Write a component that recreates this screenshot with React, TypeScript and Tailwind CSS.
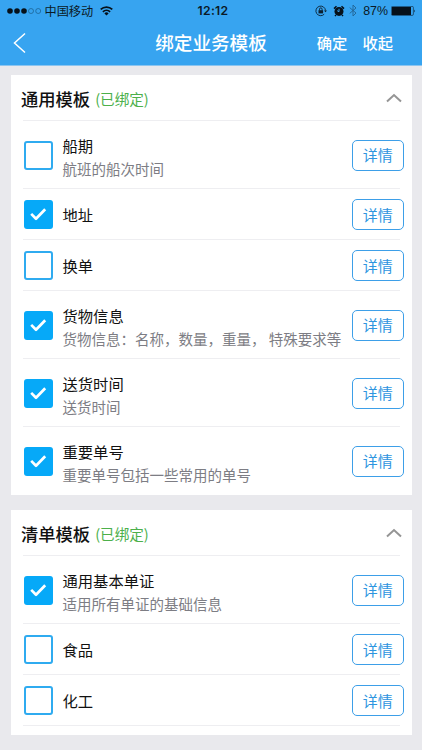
type Item = { title: string; desc?: string; checked?: boolean };

const general: Item[] = [
  { title: "船期", desc: "航班的船次时间" },
  { title: "地址", checked: true },
  { title: "换单" },
  { title: "货物信息", desc: "货物信息：名称，数量，重量， 特殊要求等", checked: true },
  { title: "送货时间", desc: "送货时间", checked: true },
  { title: "重要单号", desc: "重要单号包括一些常用的单号", checked: true },
];

const lists: Item[] = [
  { title: "通用基本单证", desc: "适用所有单证的基础信息", checked: true },
  { title: "食品" },
  { title: "化工" },
];

function Checkbox({ checked }: { checked?: boolean }) {
  if (!checked) {
    return <span className="h-[29px] w-[29px] shrink-0 rounded-[3px] border-2 border-[#2fabf0]" />;
  }
  return (
    <span className="flex h-[29px] w-[29px] shrink-0 items-center justify-center rounded-[3px] bg-[#06a9f8]">
      <svg width="29" height="29" viewBox="0 0 29 29" fill="none" stroke="white" strokeWidth="2.7" strokeLinejoin="round">
        <path d="M7.2 13.9L12 18.7L21.2 9.3" />
      </svg>
    </span>
  );
}

function Row({ item, line }: { item: Item; line: boolean }) {
  return (
    <div className={`relative flex items-center pr-[8px] pl-[13px] ${item.desc ? "h-[68px]" : "h-[51px]"}`}>
      <Checkbox checked={item.checked} />
      <div className={`ml-[10px] flex-1 whitespace-nowrap ${item.desc ? "pt-[4px]" : "pb-[2px]"}`}>
        <div className="text-[15.3px] leading-[22px] text-[#111]">{item.title}</div>
        {item.desc && <div className="mt-[2px] text-[14.5px] leading-[22px] text-[#7d7d84]">{item.desc}</div>}
      </div>
      <button className="h-[31px] w-[51.5px] shrink-0 rounded-[5px] border border-[#3d9fe8] text-[15px] leading-[28px] text-[#2e95df]">
        详情
      </button>
      {line && <span className="absolute right-[12px] bottom-0 left-[12px] h-px bg-[#eeeef1]" />}
    </div>
  );
}

function Card({ title, items, closed }: { title: string; items: Item[]; closed?: boolean }) {
  return (
    <section className={`mr-[10.5px] ml-[10.5px] bg-white ${closed ? "pb-[8.5px]" : ""}`}>
      <div className="relative flex h-[46px] items-center pr-[10px] pl-[10.5px]">
        <h2 className="mt-[1px] text-[17.3px] leading-[24px] font-medium text-[#111]">{title}</h2>
        <span className="mt-[1px] ml-[5px] text-[14.6px] text-[#4cb04b]">(已绑定)</span>
        <svg className="ml-auto" width="16" height="10" viewBox="0 0 16 10" fill="none" stroke="#959595" strokeWidth="2">
          <path d="M1 8.6L8 2L15 8.6" />
        </svg>
        <span className="absolute right-[12px] bottom-0 left-[12px] h-px bg-[#eeeef1]" />
      </div>
      {items.map((item, i) => (
        <Row key={item.title} item={item} line={closed || i < items.length - 1} />
      ))}
    </section>
  );
}

function StatusBar() {
  return (
    <div className="grid h-[21px] grid-cols-[1fr_auto_1fr] items-center text-[12px] leading-[20px] text-[#0b1a26]">
      <div className="flex items-center pl-[7px]">
        <svg width="35" height="8" viewBox="0 0 35 8">
          <circle cx="3" cy="4" r="2.8" fill="#06111a" />
          <circle cx="10" cy="4" r="2.8" fill="#06111a" />
          <circle cx="17" cy="4" r="2.8" fill="#06111a" />
          <circle cx="24" cy="4" r="2.5" fill="none" stroke="#14507a" strokeWidth=".6" />
          <circle cx="31.2" cy="4" r="2.5" fill="none" stroke="#14507a" strokeWidth=".6" />
        </svg>
        <span className="ml-[2.5px] text-[12.2px]">中国移动</span>
        <svg className="ml-[7px]" width="13" height="10" viewBox="0 0 13 10" fill="none" stroke="#06111a" strokeWidth="1.7">
          <path d="M.7 3.4A8.4 8.4 0 0 1 12.3 3.4" />
          <path d="M2.9 5.8A5.2 5.2 0 0 1 10.1 5.8" />
          <path d="M6.5 9.4L4.4 7.4A3 3 0 0 1 8.6 7.4Z" fill="#06111a" stroke="none" />
        </svg>
      </div>
      <div className="pl-[4px] font-['Inter','Noto_Sans_CJK_SC',sans-serif] text-[12.2px] font-semibold tracking-[.3px] text-[#0b1a26]">12:12</div>
      <div className="flex items-center justify-end pr-[6px]">
        <svg width="12" height="12" viewBox="0 0 12 12" fill="none" stroke="#0b2030" strokeWidth=".9">
          <path d="M9.2 9.2A4.8 4.8 0 1 1 10.5 5.5" />
          <path d="M8.9 5.4H12L10.5 7.3Z" fill="#0b2030" stroke="none" />
          <rect x="3.5" y="5.2" width="4.6" height="3.2" fill="#0b2030" stroke="none" />
          <path d="M4.5 5.3V4.2A1.3 1.3 0 0 1 7.1 4.2V5.3" />
        </svg>
        <svg className="ml-[6px]" width="12" height="12" viewBox="0 0 12 12">
          <circle cx="6" cy="6.4" r="4.5" fill="#06111a" />
          <path d="M1 3.6L3.5 1.3M11 3.6L8.5 1.3M3 10L2 11M9 10L10 11" stroke="#06111a" strokeWidth="1.5" />
          <path d="M6 6.7V3.8M6 6.7L4.2 5.7" stroke="#37a4f0" strokeWidth="1" fill="none" />
        </svg>
        <svg className="ml-[4.5px]" width="8" height="13" viewBox="0 0 8 13" fill="none" stroke="#226391" strokeWidth=".9">
          <path d="M.7 3.6L7 9L4 12V1L7 4L.7 9.4" />
        </svg>
        <span className="ml-[6px] font-['Liberation_Sans','Noto_Sans_CJK_SC',sans-serif] text-[12.4px]">87%</span>
        <svg className="ml-[3px]" width="25" height="10" viewBox="0 0 25 10">
          <rect x=".4" y=".4" width="22" height="9" rx="1.2" fill="none" stroke="#0b2030" strokeWidth=".6" />
          <rect x="1" y="1" width="19" height="8" fill="#06111a" />
          <path d="M23.4 3.4Q24.7 5 23.4 6.6Z" fill="#06111a" />
        </svg>
      </div>
    </div>
  );
}

export default function App() {
  return (
    <div className="h-[750px] w-[422px] overflow-hidden bg-[#e9e9ed] font-['Noto_Sans_CJK_SC',sans-serif]">
      <header className="h-[66px] border-b border-[#8cc5f0] bg-[#37a4f0]">
        <StatusBar />
        <nav className="grid h-[44px] grid-cols-[1fr_auto_1fr] items-center text-white">
          <svg className="ml-[13px]" width="13" height="22" viewBox="0 0 13 22" fill="none" stroke="white" strokeWidth="1.5">
            <path d="M12 1.5L1.5 11L12 20.5" />
          </svg>
          <h1 className="pb-[2px] text-[18.6px] leading-[28px] font-medium">绑定业务模板</h1>
          <div className="flex justify-end gap-[15px] pr-[29px] pb-[2px] text-[15.3px] font-medium">
            <span>确定</span>
            <span>收起</span>
          </div>
        </nav>
      </header>
      <main className="flex flex-col gap-[15px] pt-[9px]">
        <Card title="通用模板" items={general} />
        <Card title="清单模板" items={lists} closed />
      </main>
    </div>
  );
}
